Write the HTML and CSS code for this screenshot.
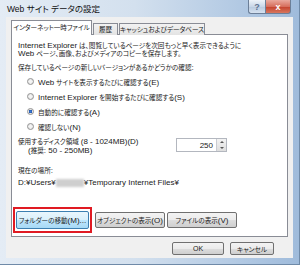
FILE: index.html
```html
<!DOCTYPE html>
<html lang="ja">
<head>
    <meta charset="UTF-8">
    <title>Web サイト データの設定</title>
    <link rel="stylesheet" href="styles.css">
</head>
<body>
    <div class="window">
        <div class="titlebar">
            <span class="title">Web サイト データの設定</span>
            <div class="caption-buttons">
                <span class="cap-btn help">?</span>
                <span class="cap-btn close">x</span>
            </div>
        </div>
        <div class="client">
            <div class="tabs">
                <span class="tab active">インターネット一時ファイル</span>
                <span class="tab history">履歴</span>
                <span class="tab cache">キャッシュおよびデータベース</span>
            </div>
            <div class="panel">
                <p class="intro"><span class="en">Internet Explorer</span> は、閲覧しているページを次回もっと早く表示できるように<br><span class="en">Web</span> ページ、画像、およびメディアのコピーを保存します。</p>
                <p class="label">保存しているページの新しいバージョンがあるかどうかの確認<span class="en">:</span></p>
                <ul class="radios">
                    <li><span class="radio"></span><span><span class="en">Web</span> サイトを表示するたびに確認する<span class="en">(E)</span></span></li>
                    <li><span class="radio"></span><span><span class="en">Internet Explorer</span> を開始するたびに確認する<span class="en">(S)</span></span></li>
                    <li><span class="radio checked"></span><span>自動的に確認する<span class="en">(A)</span></span></li>
                    <li><span class="radio"></span><span>確認しない<span class="en">(N)</span></span></li>
                </ul>
                <div class="disk-row">
                    <div class="disk-text">使用するディスク領域 <span class="en">(8 - 1024MB)(D)</span><br><span class="hint"><span class="en">(</span>推奨<span class="en">: 50 - 250MB)</span></span></div>
                    <div class="spinner">
                        <span class="value en">250</span>
                        <span class="spin"><span class="arrow up"></span><span class="arrow down"></span></span>
                    </div>
                </div>
                <p class="label location">現在の場所<span class="en">:</span></p>
                <p class="path en">D:¥Users¥<span class="blur"></span>¥Temporary Internet Files¥</p>
                <div class="panel-buttons">
                    <span class="highlight"><button class="btn focused">フォルダーの移動<span class="en">(M)...</span></button></span>
                    <button class="btn wide">オブジェクトの表示<span class="en">(O)</span></button>
                    <button class="btn wide">ファイルの表示<span class="en">(V)</span></button>
                </div>
            </div>
            <div class="footer">
                <button class="btn ok en">OK</button>
                <button class="btn cancel">キャンセル</button>
            </div>
        </div>
    </div>
</body>
</html>
```

FILE: styles.css
```css
body {
    margin: 0;
    font-family: 'Liberation Sans', 'Noto Sans CJK JP', sans-serif;
    font-size: 6.6px;
    font-feature-settings: "palt";
    color: #1a1a1a;
    background: #fff;
}
p {
    margin: 0;
}
/* latin runs are set larger than the kana/kanji */
.en {
    font-size: 8px;
}
.window {
    width: 300px;
    height: 265px;
    box-sizing: border-box;
    padding: 0 6px 6px 6px;
    display: flex;
    flex-direction: column;
    background: linear-gradient(90deg, #e4ecf5 0%, #d3e0ee 45%, #b2c9e3 80%, #9fbbdb 100%);
    border-right: 1px solid #6f8aa8;
    border-bottom: 1px solid #6f8aa8;
}
.titlebar {
    height: 17px;
    display: flex;
    align-items: flex-start;
    justify-content: space-between;
}
.title {
    font-size: 8.5px;
    line-height: 18px;
    margin-left: 1px;
    color: #111;
}
.caption-buttons {
    display: flex;
    margin-right: 2px;
}
.cap-btn {
    height: 14px;
    box-sizing: border-box;
    display: flex;
    align-items: center;
    justify-content: center;
    border: 1px solid #6c7f98;
    border-top: none;
    font-family: 'Liberation Sans', sans-serif;
    font-size: 9px;
    font-weight: bold;
}
.help {
    width: 17px;
    border-right: none;
    border-radius: 0 0 0 3px;
    background: linear-gradient(#eef3f9, #c9d7e8 50%, #b7c9df 51%, #d6e2f0);
    color: #5d7190;
}
.close {
    width: 26px;
    border-radius: 0 0 3px 0;
    background: linear-gradient(#eaa99d, #d66f5d 50%, #c4412b 51%, #d7775f);
    color: #fff;
}
.client {
    flex: 1;
    display: flex;
    flex-direction: column;
    background: #f0f0f0;
    padding: 4px 5px 0 5px;
}
.tabs {
    display: flex;
    align-items: flex-end;
    height: 14px;
    margin-bottom: -1px;
    position: relative;
    z-index: 1;
}
.tab {
    height: 12px;
    box-sizing: border-box;
    line-height: 11px;
    border: 1px solid #898c95;
    border-bottom: none;
    background: linear-gradient(#f2f2f2, #e3e3e3);
    white-space: nowrap;
    text-align: center;
}
.tab.active {
    width: 81px;
    height: 15px;
    line-height: 14px;
    background: #fff;
}
.tab.history {
    width: 25px;
    margin-left: 1px;
}
.tab.cache {
    width: 86px;
    margin-left: 1px;
}
.panel {
    height: 203px;
    box-sizing: border-box;
    background: #fff;
    border: 1px solid #898c95;
    padding: 7px 6px 3px 6px;
    display: flex;
    flex-direction: column;
}
.intro {
    line-height: 8px;
}
.label {
    margin-top: 5px;
    line-height: 9px;
}
.radios {
    list-style: none;
    margin: 2px 0 0 9px;
    padding: 0;
}
.radios li {
    height: 15px;
    display: flex;
    align-items: center;
    gap: 4px;
}
.radio {
    width: 7px;
    height: 7px;
    box-sizing: border-box;
    border-radius: 50%;
    border: 1px solid #939393;
    background: radial-gradient(circle, #f4f4f4 30%, #dcdcdc 100%);
}
.radio.checked {
    background: radial-gradient(circle, #3f7fd8 0%, #2458b0 45%, #e6e6e6 55%);
}
.disk-row {
    display: grid;
    grid-template-columns: 158px 51px;
    margin-top: 3px;
    line-height: 9px;
}
.hint {
    padding-left: 10px;
}
.spinner {
    height: 14px;
    margin-top: 1px;
    box-sizing: border-box;
    border: 1px solid #b3b7bf;
    display: flex;
    align-items: center;
}
.spinner .value {
    flex: 1;
    text-align: right;
    padding-right: 3px;
}
.spin {
    width: 9px;
    height: 12px;
    display: flex;
    flex-direction: column;
    border-left: 1px solid #c9ccd2;
    background: linear-gradient(#f3f3f3, #dedede);
}
.arrow {
    flex: 1;
    display: flex;
    align-items: center;
    justify-content: center;
}
.arrow.up::before {
    content: '';
    border: 2px solid transparent;
    border-bottom: 2px solid #555;
    border-top: none;
}
.arrow.down::before {
    content: '';
    border: 2px solid transparent;
    border-top: 2px solid #555;
    border-bottom: none;
}
.location {
    margin-top: 11px;
}
.path {
    margin-top: 3px;
    line-height: 9px;
    display: flex;
    align-items: center;
}
.blur {
    display: inline-block;
    width: 28px;
    height: 8px;
    background: #cfcfcf;
    filter: blur(1px);
}
.panel-buttons {
    margin-top: auto;
    margin-left: -5px;
    display: flex;
    align-items: center;
    gap: 2px;
}
.highlight {
    border: 2px solid #e01a22;
    padding: 2px 1px;
    margin-right: 1px;
    display: flex;
}
.btn {
    font-family: inherit;
    font-size: 6.6px;
    font-feature-settings: "palt";
    color: #1a1a1a;
    height: 16px;
    padding: 0;
    box-sizing: border-box;
    border: 1px solid #707070;
    border-radius: 2px;
    background: linear-gradient(#f3f3f3, #ebebeb 50%, #dddddd 51%, #cfcfcf);
    white-space: nowrap;
}
.btn.focused {
    width: 73px;
    height: 18px;
    border-color: #3c7fb1;
    background: linear-gradient(#eaf6fd, #d9f0fc 50%, #bee6fd 51%, #a7d9f5);
}
.btn.wide {
    width: 70px;
}
.footer {
    display: flex;
    justify-content: flex-end;
    gap: 6px;
    padding: 5px 14px 0 0;
}
.btn.ok {
    width: 52px;
    height: 13px;
    font-size: 7px;
}
.btn.cancel {
    width: 44px;
    height: 13px;
}
```
